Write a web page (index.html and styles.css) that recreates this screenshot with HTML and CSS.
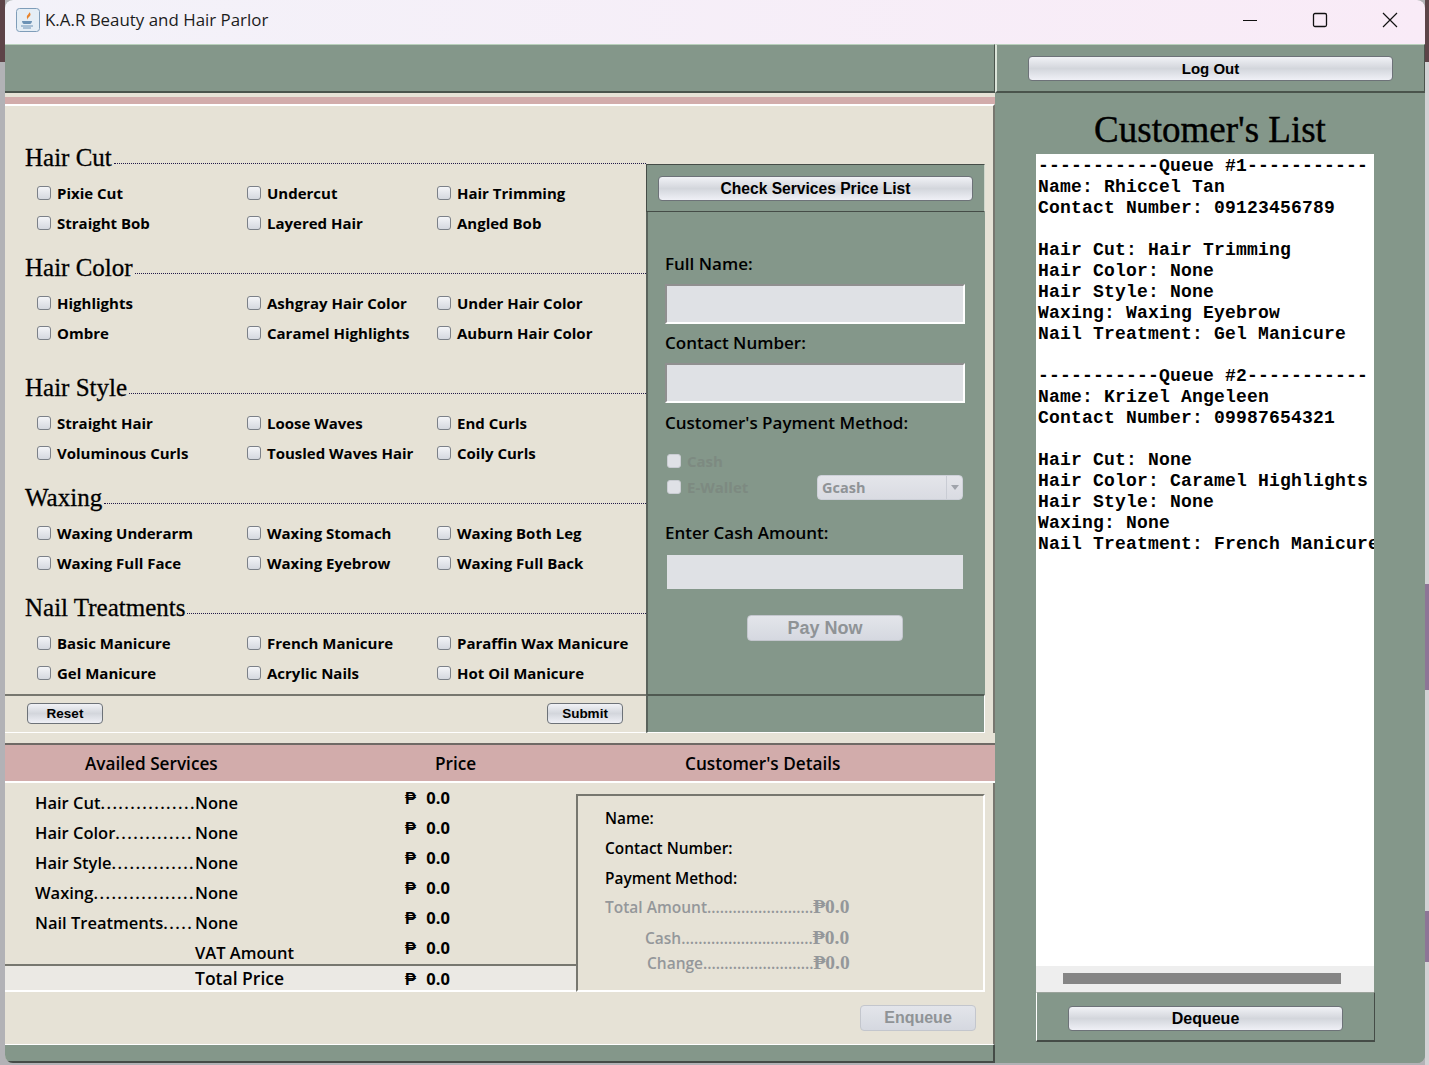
FILE: index.html
```html
<!DOCTYPE html>
<html lang="en">
<head>
<meta charset="UTF-8">
<meta name="viewport" content="width=device-width, initial-scale=1.0">
<title>K.A.R Beauty and Hair Parlor</title>
<link rel="stylesheet" href="styles.css">
</head>
<body>

<div class="window">
  <div class="titlebar">
    <svg class="app-icon" width="24" height="24" viewBox="0 0 24 24">
      <rect x="0.5" y="0.5" width="23" height="23" rx="3" fill="#e4edf5" stroke="#7f9db9"/>
      <path d="M13 4c1 2-3 3-2 6 .3 1 1 1.500 1 1.500-1-2 3-3 2.500-5.500-.1-.8-.8-1.500-1.500-2z" fill="#e8842c"/>
      <path d="M6 13h10c0 1-1 3-2 3H8c-1 0-2-2-2-3z" fill="#6c92b5"/>
      <path d="M5 18h12M7 20h8" stroke="#6c92b5" fill="none"/>
    </svg>
    <span class="app-title">K.A.R Beauty and Hair Parlor</span>
    <div class="win-controls">
      <svg width="16" height="16" viewBox="0 0 16 16"><path d="M1 8.500h14" stroke="#111" fill="none"/></svg>
      <svg width="16" height="16" viewBox="0 0 16 16"><rect x="1.500" y="1.500" width="13" height="13" rx="1.500" stroke="#111" stroke-width="1.300" fill="none"/></svg>
      <svg width="16" height="16" viewBox="0 0 16 16"><path d="M1 1l14 14M15 1L1 15" stroke="#111" stroke-width="1.200" fill="none"/></svg>
    </div>
  </div>

  <div class="content">
    <div class="left-side">
      <div class="top-bar"></div>
      <div class="pink-stripe"></div>

      <div class="order-panel">
        <div class="services">
          <div class="service-group">
            <div class="group-head"><h2>Hair Cut</h2><span class="dots"></span></div>
            <div class="check-grid">
              <label class="check"><input type="checkbox">Pixie Cut</label>
              <label class="check"><input type="checkbox">Undercut</label>
              <label class="check"><input type="checkbox">Hair Trimming</label>
              <label class="check"><input type="checkbox">Straight Bob</label>
              <label class="check"><input type="checkbox">Layered Hair</label>
              <label class="check"><input type="checkbox">Angled Bob</label>
            </div>
          </div>
          <div class="service-group">
            <div class="group-head"><h2>Hair Color</h2><span class="dots"></span></div>
            <div class="check-grid">
              <label class="check"><input type="checkbox">Highlights</label>
              <label class="check"><input type="checkbox">Ashgray Hair Color</label>
              <label class="check"><input type="checkbox">Under Hair Color</label>
              <label class="check"><input type="checkbox">Ombre</label>
              <label class="check"><input type="checkbox">Caramel Highlights</label>
              <label class="check"><input type="checkbox">Auburn Hair Color</label>
            </div>
          </div>
          <div class="service-group wide-gap">
            <div class="group-head"><h2>Hair Style</h2><span class="dots"></span></div>
            <div class="check-grid">
              <label class="check"><input type="checkbox">Straight Hair</label>
              <label class="check"><input type="checkbox">Loose Waves</label>
              <label class="check"><input type="checkbox">End Curls</label>
              <label class="check"><input type="checkbox">Voluminous Curls</label>
              <label class="check"><input type="checkbox">Tousled Waves Hair</label>
              <label class="check"><input type="checkbox">Coily Curls</label>
            </div>
          </div>
          <div class="service-group">
            <div class="group-head"><h2>Waxing</h2><span class="dots"></span></div>
            <div class="check-grid">
              <label class="check"><input type="checkbox">Waxing Underarm</label>
              <label class="check"><input type="checkbox">Waxing Stomach</label>
              <label class="check"><input type="checkbox">Waxing Both Leg</label>
              <label class="check"><input type="checkbox">Waxing Full Face</label>
              <label class="check"><input type="checkbox">Waxing Eyebrow</label>
              <label class="check"><input type="checkbox">Waxing Full Back</label>
            </div>
          </div>
          <div class="service-group">
            <div class="group-head"><h2>Nail Treatments</h2><span class="dots"></span></div>
            <div class="check-grid">
              <label class="check"><input type="checkbox">Basic Manicure</label>
              <label class="check"><input type="checkbox">French Manicure</label>
              <label class="check"><input type="checkbox">Paraffin Wax Manicure</label>
              <label class="check"><input type="checkbox">Gel Manicure</label>
              <label class="check"><input type="checkbox">Acrylic Nails</label>
              <label class="check"><input type="checkbox">Hot Oil Manicure</label>
            </div>
          </div>
          <div class="form-actions">
            <button class="btn btn-small">Reset</button>
            <button class="btn btn-small">Submit</button>
          </div>
        </div>

        <div class="customer-form">
          <div class="price-list-box">
            <button class="btn btn-price">Check Services Price List</button>
          </div>
          <div class="form-body">
            <div class="field-label first">Full Name:</div>
            <input class="text-field" type="text">
            <div class="field-label">Contact Number:</div>
            <input class="text-field" type="text">
            <div class="field-label method">Customer's Payment Method:</div>
            <div class="pay-methods">
              <label class="check muted"><input type="checkbox" disabled>Cash</label>
              <div class="pay-row">
                <label class="check muted"><input type="checkbox" disabled>E-Wallet</label>
                <div class="combo"><span class="combo-text">Gcash</span><span class="combo-arrow"></span></div>
              </div>
            </div>
            <div class="field-label cash">Enter Cash Amount:</div>
            <input class="text-field flat" type="text" disabled>
            <button class="btn btn-pay" disabled>Pay Now</button>
          </div>
          <div class="form-foot"></div>
        </div>
      </div>

      <div class="summary-head">
        <span class="head-cell">Availed Services</span>
        <span class="head-cell">Price</span>
        <span class="head-cell">Customer's Details</span>
      </div>

      <div class="summary">
        <div class="bill">
          <div class="bill-row"><span>Hair Cut<span class="leader">................</span></span><span>None</span><span class="price">₱ 0.0</span></div>
          <div class="bill-row"><span>Hair Color<span class="leader">.............</span></span><span>None</span><span class="price">₱ 0.0</span></div>
          <div class="bill-row"><span>Hair Style<span class="leader">..............</span></span><span>None</span><span class="price">₱ 0.0</span></div>
          <div class="bill-row"><span>Waxing<span class="leader">.................</span></span><span>None</span><span class="price">₱ 0.0</span></div>
          <div class="bill-row"><span>Nail Treatments<span class="leader">.....</span></span><span>None</span><span class="price">₱ 0.0</span></div>
          <div class="bill-row"><span></span><span>VAT Amount</span><span class="price">₱ 0.0</span></div>
          <div class="bill-row total"><span></span><span>Total Price</span><span class="price">₱ 0.0</span></div>
        </div>
        <div class="details">
          <div class="detail-line">Name:</div>
          <div class="detail-line">Contact Number:</div>
          <div class="detail-line">Payment Method:</div>
          <div class="amount-line">Total Amount.........................<span class="amount">₱0.0</span></div>
          <div class="amount-line indent">Cash...............................<span class="amount">₱0.0</span></div>
          <div class="amount-line indent short">Change..........................<span class="amount">₱0.0</span></div>
        </div>
      </div>

      <div class="enqueue-row">
        <button class="btn btn-enqueue" disabled>Enqueue</button>
      </div>
      <div class="bottom-bar"></div>
    </div>

    <div class="right-side">
      <div class="logout-bar">
        <button class="btn btn-logout">Log Out</button>
      </div>
      <h1>Customer's List</h1>
      <div class="queue-wrap">
<pre class="queue">-----------Queue #1-----------
Name: Rhiccel Tan
Contact Number: 09123456789

Hair Cut: Hair Trimming
Hair Color: None
Hair Style: None
Waxing: Waxing Eyebrow
Nail Treatment: Gel Manicure

-----------Queue #2-----------
Name: Krizel Angeleen
Contact Number: 09987654321

Hair Cut: None
Hair Color: Caramel Highlights
Hair Style: None
Waxing: None
Nail Treatment: French Manicure</pre>
        <div class="scrollbar"><div class="thumb"></div></div>
        <div class="dequeue-box">
          <button class="btn btn-dequeue">Dequeue</button>
        </div>
      </div>
    </div>
  </div>
</div>

</body>
</html>
```

FILE: styles.css
```css
* {
  box-sizing: border-box;
}
html, body {
  margin: 0;
  height: 1065px;
  overflow: hidden;
}
body {
  /* the desktop that shows around the window */
  background:
    linear-gradient(to bottom, #5d4448 0, #5d4448 62px, #b2b2b6 62px) left top / 5px 100% no-repeat,
    linear-gradient(to bottom, #5d4448 0, #5d4448 62px, #d2d2d4 62px, #d2d2d4 584px, #8d7596 584px, #8d7596 690px, #d2d2d4 690px, #d2d2d4 911px, #8d7596 911px, #8d7596 962px, #d2d2d4 962px) right top / 4px 100% no-repeat,
    #b2b2b6;
  font-family: "Open Sans", sans-serif;
  color: #000;
}
.window {
  width: 1420px;
  height: 1063px;
  margin-left: 5px;
  border-radius: 8px;
  overflow: hidden;
  background-color: #84978a;
  display: flex;
  flex-direction: column;
}

/* title bar */
.titlebar {
  height: 44px;
  flex: none;
  display: flex;
  align-items: center;
  padding: 0 0 4px 11px;
  background: linear-gradient(to right, #f3f2f9, #f9ebf7);
}
.app-icon {
  margin-right: 5px;
}
.app-title {
  font-family: "Open Sans", sans-serif;
  font-size: 16.900px;
  color: #1c1c1c;
  padding-bottom: 1px;
}
.win-controls {
  margin-left: auto;
  display: flex;
  gap: 54px;
  padding-right: 27px;
}

.content {
  flex: 1;
  display: flex;
  min-height: 0;
}
.left-side {
  width: 990px;
  flex: none;
  display: flex;
  flex-direction: column;
  background-color: #e6e2d6;
}
.top-bar {
  height: 49px;
  background-color: #84978a;
  border-top: 1px solid #b9d0bc;
  border-right: 1px solid #4a544c;
  border-bottom: 2px solid #4a544c;
}
.pink-stripe {
  height: 11px;
  background: linear-gradient(to bottom, #e6e2d6 0, #e6e2d6 4px, #d2acab 4px);
}

/* services + customer form */
.order-panel {
  height: 629px;
  flex: none;
  display: flex;
  background-color: #e6e2d6;
  border-top: 2px solid #fff;
  border-right: 2px solid #77776f;
  padding-right: 8px;
}
.services {
  width: 641px;
  flex: none;
  display: flex;
  flex-direction: column;
  padding-top: 37px;
}
.service-group {
  flex: none;
  padding-left: 20px;
}
.service-group + .service-group {
  margin-top: 15px;
}
.service-group.wide-gap {
  margin-top: 25px;
}
.group-head {
  display: flex;
  align-items: flex-end;
  height: 28px;
}
.group-head h2 {
  margin: 0 0 -1px 0;
  font-family: "Liberation Serif", serif;
  font-weight: 400;
  font-size: 25px;
  line-height: 28px;
  -webkit-text-stroke: 0.3px #000;
}
.dots {
  flex: 1;
  height: 8px;
  margin-left: 2px;
  border-top: 1px dotted #221a4a;
}
.check-grid {
  display: grid;
  grid-template-columns: 210px 190px 1fr;
  grid-auto-rows: 30px;
  padding: 7px 0 0 12px;
}
.check {
  display: flex;
  align-items: center;
  font-size: 15px;
  font-weight: 700;
  white-space: nowrap;
}
.check input {
  appearance: none;
  width: 14px;
  height: 14px;
  margin: 0 6px 0 0;
  border: 1px solid #7b8088;
  border-radius: 3px;
  background: linear-gradient(to bottom, #f4f5f8, #d5d8df);
}
.check.muted {
  color: #7d8a81;
}
.check.muted input {
  border-color: #c9ccd2;
  background: #dfe1e6;
}
.form-actions {
  margin-top: auto;
  height: 39px;
  flex: none;
  display: flex;
  justify-content: space-between;
  align-items: flex-start;
  padding: 7px 23px 0 22px;
  border-top: 2px solid #77776f;
  border-bottom: 1px solid #fff;
}

/* buttons */
.btn {
  font-family: "Liberation Sans", sans-serif;
  font-weight: 700;
  color: #000;
  border: 1px solid #6d7278;
  border-radius: 4px;
  background: linear-gradient(to bottom, #f1f2f6 0, #d3d6dc 50%, #eff0f6 100%);
  padding: 0;
}
.btn[disabled] {
  color: #8f9396;
  border-color: #c3c6cd;
  background: linear-gradient(to bottom, #e3e5ea, #d5d8e0);
}
.btn-small {
  width: 76px;
  height: 21px;
  font-size: 13.500px;
}
.btn-price {
  width: 315px;
  height: 25px;
  font-size: 15.600px;
}
.btn-pay {
  display: block;
  width: 156px;
  height: 26px;
  margin: 26px 0 0 82px;
  font-size: 18px;
}
.btn-enqueue {
  width: 116px;
  height: 26px;
  font-size: 16px;
}
.btn-logout {
  width: 365px;
  height: 25px;
  font-size: 15px;
}
.btn-dequeue {
  width: 275px;
  height: 25px;
  font-size: 16px;
}

/* customer form */
.customer-form {
  width: 339px;
  flex: none;
  display: flex;
  flex-direction: column;
  padding-top: 58px;
}
.price-list-box {
  height: 48px;
  flex: none;
  padding: 11px 0 0 11px;
  background-color: #84978a;
  border: 1px solid;
  border-color: #454c47 #cfd6cb #454c47 #454c47;
}
.form-body {
  flex: 1;
  background-color: #84978a;
  border-left: 2px solid #5a635c;
  padding: 0 17px;
}
.field-label {
  font-size: 17px;
  font-weight: 600;
  line-height: 24px;
  margin-top: 7px;
  margin-bottom: 8px;
  white-space: nowrap;
}
.field-label.first {
  margin-top: 40px;
}
.field-label.method {
  margin-top: 8px;
}
.field-label.cash {
  margin-top: 21px;
  margin-bottom: 10px;
}
.text-field {
  display: block;
  width: 300px;
  height: 40px;
  background-color: #dfe1e5;
  border: 2px solid;
  border-color: #8f8f8f #fff #fff #8f8f8f;
  padding: 0;
}
.text-field.flat {
  width: 296px;
  height: 34px;
  margin-left: 2px;
  border: none;
}
.pay-methods {
  margin-top: 13px;
  margin-left: 2px;
}
.pay-methods .check {
  height: 26px;
  font-size: 15px;
}
.pay-row {
  display: flex;
  justify-content: space-between;
  align-items: center;
  width: 296px;
}
.combo {
  width: 146px;
  height: 25px;
  display: flex;
  align-items: center;
  justify-content: space-between;
  border: 1px solid #cdd0d8;
  border-radius: 4px;
  background: linear-gradient(to bottom, #e4e5ea, #d9dbe2);
}
.combo-text {
  padding-left: 4px;
  font-size: 14.500px;
  font-weight: 700;
  color: #8f9396;
}
.combo-arrow {
  width: 16px;
  height: 100%;
  border-left: 1px solid #c9ccd4;
  position: relative;
}
.combo-arrow::after {
  content: "";
  position: absolute;
  left: 4px;
  top: 9px;
  border-left: 4px solid transparent;
  border-right: 4px solid transparent;
  border-top: 5px solid #a0a4ab;
}
.form-foot {
  height: 39px;
  flex: none;
  background-color: #84978a;
  border-top: 2px solid #4f5951;
  border-left: 2px solid #5a635c;
  border-right: 1px solid #fff;
  border-bottom: 1px solid #fff;
}

/* summary */
.summary-head {
  height: 40px;
  flex: none;
  margin-top: 10px;
  display: grid;
  grid-template-columns: 350px 250px 1fr;
  align-items: center;
  background-color: #d2acab;
  border-top: 2px solid #6f6a66;
  border-bottom: 2px solid #fff;
  font-size: 17.200px;
  font-weight: 600;
}
.head-cell {
  padding: 1px 0 0 80px;
}
.summary {
  height: 209px;
  flex: none;
  display: flex;
  background-color: #e6e2d6;
  border-right: 2px solid #77776f;
  padding-right: 8px;
}
.bill {
  width: 571px;
  flex: none;
  padding-top: 3px;
}
.bill-row {
  display: grid;
  grid-template-columns: 160px 210px 1fr;
  height: 30px;
  align-items: center;
  padding-left: 30px;
  font-size: 16.500px;
  font-weight: 600;
  white-space: nowrap;
}
.leader {
  letter-spacing: 1.450px;
}
.price {
  font-weight: 700;
  word-spacing: 6px;
  padding-bottom: 10px;
}
.bill-row.total {
  height: 28px;
  margin-top: -2px;
  background-color: #ebe9e4;
  border-top: 2px solid #77776f;
  border-bottom: 2px solid #fff;
  font-size: 17.500px;
}
.bill-row.total .price {
  padding-bottom: 0;
  font-size: 16.500px;
}
.details {
  flex: 1;
  height: 198px;
  margin-top: 11px;
  padding: 8px 0 0 27px;
  border: 2px solid;
  border-color: #77776f #fff #fff #77776f;
}
.detail-line {
  font-size: 15.400px;
  font-weight: 600;
  line-height: 30px;
}
.amount-line {
  margin-top: -1px;
  font-size: 15.500px;
  font-weight: 600;
  color: #94979a;
  line-height: 28px;
  white-space: nowrap;
}
.amount-line.indent {
  margin: 2px 0 0 40px;
  line-height: 30px;
}
.amount-line.short {
  margin: 0 0 0 42px;
  line-height: 20px;
}
.amount {
  font-family: "Liberation Serif", serif;
  font-size: 19.500px;
  font-weight: 700;
}
.enqueue-row {
  height: 52px;
  flex: none;
  display: flex;
  justify-content: flex-end;
  padding: 13px 17px 0 0;
  background-color: #e6e2d6;
  border-right: 2px solid #77776f;
}
.bottom-bar {
  flex: 1;
  background-color: #84978a;
  border-top: 1px solid #fff;
  border-right: 2px solid #454c47;
  border-bottom: 2px solid #454c47;
}

/* customer list */
.right-side {
  flex: 1;
  display: flex;
  flex-direction: column;
  background-color: #84978a;
}
.logout-bar {
  height: 49px;
  flex: none;
  padding: 11px 0 0 31px;
  border-left: 2px solid #dbe4d9;
  border-top: 1px solid #b9d0bc;
  border-right: 1px solid #4a544c;
  border-bottom: 2px solid #4a544c;
}
.right-side h1 {
  margin: 16px 0 0 0;
  height: 45px;
  text-align: center;
  font-family: "Liberation Serif", serif;
  font-weight: 400;
  font-size: 37px;
  line-height: 42px;
  -webkit-text-stroke: 0.4px #000;
}
.queue-wrap {
  margin-left: 41px;
  width: 339px;
  display: flex;
  flex-direction: column;
}
.queue {
  margin: 0;
  height: 812px;
  width: 338px;
  background-color: #fff;
  padding: 2px 0 0 2px;
  font-family: "Liberation Mono", monospace;
  font-size: 18px;
  font-weight: 700;
  letter-spacing: 0.2px;
  line-height: 21px;
  overflow: hidden;
}
.scrollbar {
  height: 26px;
  width: 338px;
  background-color: #eee;
  padding: 7px 0 0 27px;
}
.thumb {
  width: 278px;
  height: 11px;
  background-color: #858585;
}
.dequeue-box {
  height: 50px;
  padding: 13px 0 0 31px;
  border-top: 1px solid #9aa39b;
  border-left: 1px solid #fff;
  border-right: 1px solid #454c47;
  border-bottom: 2px solid #454c47;
}
```
